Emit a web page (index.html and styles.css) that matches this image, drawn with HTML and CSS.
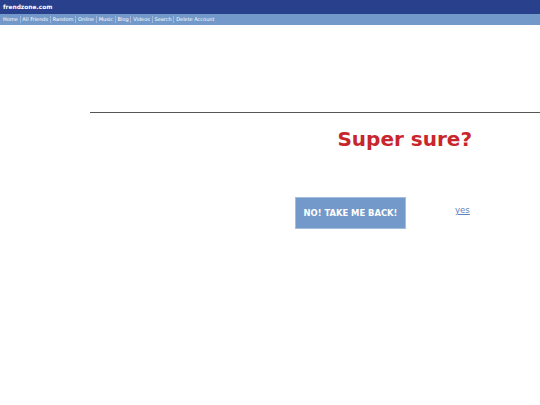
FILE: index.html
```html
<!DOCTYPE html>
<html lang="en">
<head>
    <meta charset="UTF-8">
    <meta name="viewport" content="width=device-width, initial-scale=1.0">
    <title>frendzone.com</title>
    <link rel="stylesheet" href="styles.css">
</head>
<body>
    <div class="top-bar">
        <span class="logo">frendzone.com</span>
    </div>
    <div class="nav-bar">
        <a href="#">Home</a>
        <a href="#">All Friends</a>
        <a href="#">Random</a>
        <a href="#">Online</a>
        <a href="#">Music</a>
        <a href="#">Blog</a>
        <a href="#">Videos</a>
        <a href="#">Search</a>
        <a href="#">Delete Account</a>
    </div>

    <div class="content">
        <h1 class="question">Super sure?</h1>
        <div class="actions">
            <button class="back-btn">NO! TAKE ME BACK!</button>
            <a class="yes-link" href="#">yes</a>
        </div>
    </div>
</body>
</html>
```

FILE: styles.css
```css
* {
    margin: 0;
    padding: 0;
    box-sizing: border-box;
}

body {
    background: #fff;
    font-family: "DejaVu Sans", Verdana, sans-serif;
}

.top-bar {
    height: 14px;
    background: #29408c;
    display: flex;
    align-items: center;
    padding-left: 3px;
}

.logo {
    color: #fff;
    font-size: 5.9px;
    font-weight: bold;
}

.nav-bar {
    height: 11px;
    background: #7299c9;
    display: flex;
    align-items: center;
    padding: 0 0 1px 3px;
}

.nav-bar a {
    color: #fff;
    font-size: 5px;
    line-height: 7px;
    text-decoration: none;
    padding-right: 1.8px;
    margin-right: 1.8px;
    border-right: 1px solid #9db8da;
}

.nav-bar a:last-child {
    border-right: none;
}

.content {
    margin: 87px 0 0 90px;
    border-top: 1px solid #555;
}

.question {
    margin-top: 14px;
    padding-right: 68px;
    text-align: right;
    color: #c8252c;
    font-size: 20px;
    font-weight: bold;
}

.actions {
    margin: 46px 0 0 205px;
    display: flex;
    align-items: center;
}

.back-btn {
    width: 111px;
    height: 32px;
    background: #7299c9;
    border: 1px solid #a3bfdf;
    color: #fff;
    font-family: inherit;
    font-size: 8.4px;
    font-weight: bold;
}

.yes-link {
    margin: 0 0 6px 49px;
    color: #5b85c0;
    font-size: 8.6px;
}
```
